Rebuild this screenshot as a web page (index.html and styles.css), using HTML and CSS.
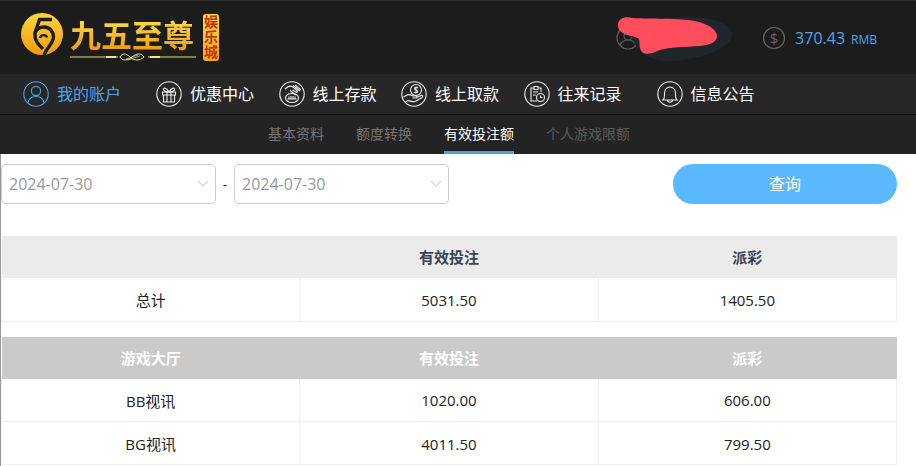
FILE: index.html
```html
<!DOCTYPE html>
<html lang="zh-CN">
<head>
  <meta charset="UTF-8">
  <meta name="viewport" content="width=device-width, initial-scale=1.0">
  <title>九五至尊娱乐城 - 有效投注额</title>
  <link rel="stylesheet" href="styles.css">
</head>
<body>
  <header class="topbar">
    <div class="logo">
      <svg class="logo-mark" width="44" height="44" viewBox="0 0 44 44">
        <defs>
          <linearGradient id="gold" x1="0" y1="0" x2="0" y2="1">
            <stop offset="0" stop-color="#ffd83a"/>
            <stop offset="1" stop-color="#f09a0c"/>
          </linearGradient>
        </defs>
        <circle cx="22" cy="22" r="21" fill="url(#gold)"/>
        <path d="M32 7.500H19.500L15 21C14 28 18 32 23 37" fill="none" stroke="#1c1c1c" stroke-width="3.4"/>
        <path d="M15 21C17 16 21 15 24 15C30 15 33.500 20 33.500 25C33.500 31 27 35 24 43" fill="none" stroke="#1c1c1c" stroke-width="3.4"/>
        <path d="M20 26C21 22.500 26 22 27 25.500" fill="none" stroke="#1c1c1c" stroke-width="2.400"/>
      </svg>
      <div class="logo-text">
        <div class="logo-name">九五至尊</div>
        <svg class="logo-line" width="126" height="10" viewBox="0 0 126 10">
          <path d="M0 5H48M78 5H126" stroke="#e8d68a" stroke-width="1"/>
          <path d="M36 5h10M80 5h10" stroke="#f2e39c" stroke-width="2"/>
          <path d="M50 5C52 1 56 1 60 5C64 9 70 9 74 5C72 1 66 1 62 5C58 9 52 9 50 5Z" fill="none" stroke="#f2e39c" stroke-width="1"/>
          <path d="M56 7L68 3M58 8L70 4" stroke="#f2e39c" stroke-width=".7"/>
        </svg>
      </div>
      <div class="logo-badge">娱乐城</div>
    </div>

    <div class="user">
      <svg class="avatar" width="24" height="24" viewBox="0 0 24 24">
        <circle cx="12" cy="12" r="11" fill="none" stroke="#5c5c5c" stroke-width="1.2"/>
        <circle cx="12" cy="10" r="4" fill="none" stroke="#5c5c5c" stroke-width="1.2"/>
        <path d="M4 19C6 15 9 14 12 14C15 14 18 15 20 19" fill="none" stroke="#5c5c5c" stroke-width="1.2"/>
      </svg>
      <svg class="scribble" width="130" height="55" viewBox="0 0 130 55">
        <path d="M20 20C50 3 105 0 120 18C130 32 100 48 60 50C40 51 24 40 20 20Z" fill="#20262c"/>
        <path d="M8 14C8 7 16 5 22 7C40 8 70 7 85 10C100 13 107 20 107 25C107 31 100 34 90 35C75 36 60 36 50 39C42 43 35 44 32 41C28 36 31 30 28 27C20 24 8 24 8 14Z" fill="#ff4d5e"/>
      </svg>
    </div>

    <div class="balance">
      <svg width="24" height="24" viewBox="0 0 24 24">
        <circle cx="12" cy="12" r="10.5" fill="none" stroke="#666" stroke-width="1.2"/>
        <text class="dollar" x="12" y="17.5" text-anchor="middle">$</text>
      </svg>
      <span class="amount">370.43</span>
      <span class="unit">RMB</span>
    </div>
  </header>

  <nav class="mainnav">
    <a class="nav-item active" href="#">
      <svg width="26" height="26" viewBox="0 0 26 26">
        <circle cx="13" cy="13" r="12.2"/>
        <circle cx="13" cy="10" r="4.6"/>
        <path d="M5 21.500C6 17 9.500 15.500 13 15.500C16.500 15.500 20 17 21 21.500"/>
      </svg>
      <span>我的账户</span>
    </a>
    <a class="nav-item nav-wide" href="#">
      <svg width="26" height="26" viewBox="0 0 26 26">
        <circle cx="13" cy="13" r="12.2"/>
        <path d="M6.500 11H19.500V14H6.500ZM7.500 14V21H18.500V14M11 11V21M15 11V21"/>
        <path d="M13 11C10 6 7 6.500 7.500 8.500C8 10.500 11 11 13 11C15 11 18 10.500 18.500 8.500C19 6.500 16 6 13 11Z"/>
      </svg>
      <span>优惠中心</span>
    </a>
    <a class="nav-item" href="#">
      <svg width="26" height="26" viewBox="0 0 26 26">
        <circle cx="13" cy="13" r="12.2"/>
        <path d="M6 8C9 5 12 4.500 14 6L18 9.500C19 10.500 18 11.500 17 11L13.500 9"/>
        <path d="M14 4.500L21 10M16 4L22 9M11 9.500L17 14"/>
        <ellipse cx="13" cy="17" rx="6.500" ry="4.500"/>
        <path d="M8.500 18H17.500M10 15.500V18M12 15V18M14 15V18M16 15.500V18"/>
      </svg>
      <span>线上存款</span>
    </a>
    <a class="nav-item" href="#">
      <svg width="26" height="26" viewBox="0 0 26 26">
        <circle cx="13" cy="13" r="12.2"/>
        <circle cx="15" cy="9" r="5.500"/>
        <path d="M17 7C16 6 13.500 6 13.500 7.800C13.500 9.500 16.800 8.700 16.800 10.300C16.800 12 14 12 13 11M15 5.500V12.500"/>
        <path d="M2.500 16L6 14C8 13 10 14 12 15H15C16.500 15 16.500 17 15 17H11.500M15.500 16.500L20 14.500C21.500 14 22.500 15.500 21 16.500L15 20C12 21.500 9 20 7 19.500L4.500 21"/>
      </svg>
      <span>线上取款</span>
    </a>
    <a class="nav-item" href="#">
      <svg width="26" height="26" viewBox="0 0 26 26">
        <circle cx="13" cy="13" r="12.2"/>
        <path d="M13 20H7V7H10M14 7H17V11"/>
        <path d="M10 5.500H14V8.500H10ZM9 11H14M9 14H12"/>
        <circle cx="16.500" cy="16.500" r="4"/>
        <path d="M16.500 14.500V16.500H18.500"/>
      </svg>
      <span>往来记录</span>
    </a>
    <a class="nav-item nav-wide" href="#">
      <svg width="26" height="26" viewBox="0 0 26 26">
        <circle cx="13" cy="13" r="12.2"/>
        <path d="M6 19C8 17 7.500 15 7.500 12C7.500 8.500 10 6 13 6C16 6 18.500 8.500 18.500 12C18.500 15 18 17 20 19Z"/>
        <path d="M10.500 19C10.500 22 15.500 22 15.500 19"/>
      </svg>
      <span>信息公告</span>
    </a>
  </nav>

  <nav class="subnav">
    <a href="#">基本资料</a>
    <a href="#">额度转换</a>
    <a class="current" href="#">有效投注额</a>
    <a class="muted" href="#">个人游戏限额</a>
  </nav>

  <main class="content">
    <div class="filters">
      <div class="date-field">
        <span>2024-07-30</span>
        <svg width="12" height="7" viewBox="0 0 12 7"><path d="M1 1L6 6L11 1"/></svg>
      </div>
      <span class="dash">-</span>
      <div class="date-field">
        <span>2024-07-30</span>
        <svg width="12" height="7" viewBox="0 0 12 7"><path d="M1 1L6 6L11 1"/></svg>
      </div>
      <button class="query">查询</button>
    </div>

    <table class="report">
      <thead>
        <tr><th></th><th>有效投注</th><th>派彩</th></tr>
      </thead>
      <tbody>
        <tr><td>总计</td><td>5031.50</td><td>1405.50</td></tr>
      </tbody>
    </table>

    <table class="report report-games">
      <thead>
        <tr><th>游戏大厅</th><th>有效投注</th><th>派彩</th></tr>
      </thead>
      <tbody>
        <tr><td>BB视讯</td><td>1020.00</td><td>606.00</td></tr>
        <tr><td>BG视讯</td><td>4011.50</td><td>799.50</td></tr>
      </tbody>
    </table>
  </main>
</body>
</html>
```

FILE: styles.css
```css
html, body { margin: 0; height: 466px; overflow: hidden; background: #fff; }
body { font-family: "Open Sans", "Noto Sans CJK SC", sans-serif; }
a { text-decoration: none; }

.topbar { height: 74px; box-sizing: border-box; border-top: 1px solid #2e2e2e; background: #1c1c1c; display: flex; align-items: center; padding: 0 39px 0 20px; }
.logo { display: flex; align-items: flex-start; margin-bottom: 1px; }
.logo-mark { margin: -1px 6px 0 0; }
.logo-text { display: flex; flex-direction: column; margin-top: 4px; }
.logo-name { font-family: "Noto Sans CJK SC", sans-serif; font-weight: 700; font-size: 31px; line-height: 34px; color: transparent; background: linear-gradient(#ffe24a, #f09a10); -webkit-background-clip: text; background-clip: text; }
.logo-line { margin-top: 1px; }
.logo-badge { margin: 1px 0 0 7px; width: 16px; height: 47px; box-sizing: border-box; border-radius: 3px; background: linear-gradient(#ffd94a, #f2a916); color: #c2320c; font-family: "Noto Sans CJK SC", sans-serif; font-weight: 700; font-size: 14px; line-height: 16px; letter-spacing: 1px; writing-mode: vertical-rl; text-align: center; }

.user { position: relative; margin-left: auto; margin-right: 122px; width: 24px; height: 24px; }
.avatar { display: block; }
.scribble { position: absolute; left: -6px; top: -15px; }

.balance { display: flex; align-items: center; color: #4da6ea; }
.balance svg { margin-right: 9px; }
.dollar { font-size: 15px; fill: #666; }
.amount { font-size: 16px; }
.unit { font-size: 12px; margin-left: 6px; padding-top: 3px; }

.mainnav { height: 41px; box-sizing: border-box; border-bottom: 1px solid #111; background: #272727; display: flex; align-items: center; padding-left: 23px; gap: 24.5px; }
.nav-item { display: flex; align-items: center; gap: 8px; color: #fff; font-family: "Noto Sans CJK SC", sans-serif; font-size: 16px; }
.nav-item span { margin-bottom: 2px; }
.nav-item svg { fill: none; stroke: #eee; stroke-width: 1.1; }
.nav-wide { margin-left: 10.5px; }
.nav-item.active { color: #4da6ea; }
.nav-item.active svg { stroke: #4da6ea; }

.subnav { height: 39px; box-sizing: border-box; background: #232323; display: flex; padding-left: 268px; gap: 32px; font-family: "Noto Sans CJK SC", sans-serif; font-size: 14px; }
.subnav a { color: #777; line-height: 36px; border-bottom: 3px solid transparent; height: 36px; }
.subnav .current { color: #fff; border-bottom-color: #4a9fe0; }
.subnav .muted { color: #5c5c5c; }

.content { height: 312px; border-left: 1px solid #999; }
.filters { display: flex; align-items: center; padding: 10px 19px 0 0; }
.date-field { width: 215px; height: 40px; box-sizing: border-box; border: 1px solid #ccc; border-radius: 5px; display: flex; align-items: center; justify-content: space-between; padding: 0 6px 0 7px; color: #999; font-size: 16px; }
.date-field svg { fill: none; stroke: #ddd; stroke-width: 1.6; margin-bottom: 2px; }
.dash { width: 18px; text-align: center; font-size: 14px; color: #333; }
.query { margin-left: auto; width: 224px; height: 40px; padding: 0 0 2px; border: none; border-radius: 20px; background: #5ab8ff; color: #fff; font-family: inherit; font-size: 16px; }

.report { width: 896px; margin: 32px 0 0; border-collapse: collapse; table-layout: fixed; font-size: 15px; }
.report th, .report td { height: 43px; box-sizing: border-box; padding: 0; text-align: center; font-weight: 400; }
.report th { height: 42px; padding-bottom: 1px; background: #ebebeb; color: #3a4450; font-weight: 700; }
.report td { padding-top: 1px; border: 1px solid #eee; border-top: none; color: #222; }
.report-games { margin-top: 15px; }
.report-games th { background: #cacaca; color: #fff; }
```
